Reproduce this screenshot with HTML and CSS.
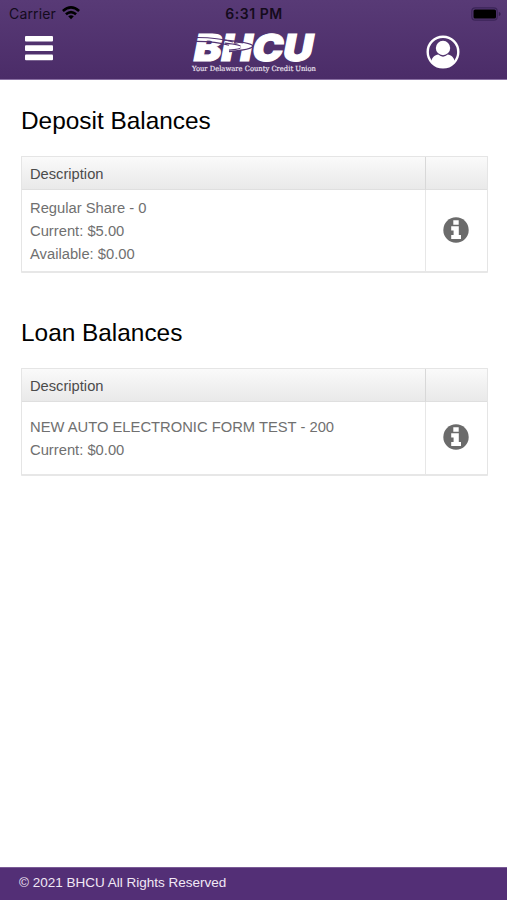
FILE: index.html
```html
<!DOCTYPE html>
<html lang="en">
<head>
<meta charset="utf-8">
<title>BHCU Balances</title>
<link rel="stylesheet" href="styles.css">
</head>
<body>
<header class="header">
  <div class="status">
    <div class="carrier"><span>Carrier</span>
      <svg class="wifi" width="18" height="14" viewBox="0 0 18 14" fill="none" stroke="#000" stroke-width="2.6"><path d="M.9 5Q9-2.2 17.1 5"/><path d="M3.9 8.3Q9 3.9 14.1 8.3"/><path d="M6.2 10.3Q9 8 11.8 10.3L9 13.3Z" fill="#000" stroke="none"/></svg>
    </div>
    <span class="time">6:31 PM</span>
    <svg class="battery" width="30" height="14" viewBox="0 0 30 14"><rect x=".8" y=".8" width="25.4" height="12.4" rx="3.5" fill="none" stroke="#3b2558" stroke-width="1.2"/><rect x="2.5" y="2.5" width="22.5" height="9" rx="1.6"/><path d="M27.8 5c2.4.7 2.4 3.3 0 4z" fill="#33204d"/></svg>
  </div>
  <nav class="nav">
    <svg class="menu" width="28" height="25" viewBox="0 0 28 25" fill="#fff"><rect y="0" width="28" height="5.6" rx="1"/><rect y="9.3" width="28" height="5.6" rx="1"/><rect y="18.6" width="28" height="5.6" rx="1"/></svg>
    <svg class="logo" width="126" height="43" viewBox="0 0 126 43">
      <g transform="translate(1 29.7) skewX(-11)"><text class="brand" x="0" y="0" textLength="119" lengthAdjust="spacingAndGlyphs">BHCU</text></g>
      <path d="M2 6.5Q26 6 42 11" fill="none" stroke="#523371" stroke-width="1.1"/>
      <path d="M2 10.4Q24 10 38 14.2" fill="none" stroke="#523371" stroke-width="1.2"/>
      <path d="M33 9.2Q60 11.5 62 15 61 18.6 38 20.6" fill="none" stroke="#523371" stroke-width="1.2"/>
      <path d="M34 12.2Q51 14 51 16.2 50 18 38 19.2" fill="none" stroke="#523371" stroke-width="1.2"/>
      <path d="M44 11.6Q57 13 58 15 57 17 49 18 53 14.5 44 11.6Z" fill="#fff"/>
      <text class="tagline" x="1" y="39.5" textLength="124" lengthAdjust="spacingAndGlyphs">Your Delaware County Credit Union</text>
    </svg>
    <svg class="user" width="34" height="34" viewBox="0 0 34 34"><circle cx="17" cy="17" r="15.3" fill="none" stroke="#fff" stroke-width="2.4"/><path d="M5.4 26.2C6 22.3 9 20 12.2 19.6Q17 23.8 21.8 19.6C25 20 28 22.3 28.6 26.2Q24.8 32.5 17 32.5T5.4 26.2Z" fill="#fff"/><circle cx="17" cy="13" r="7.2" fill="#fff"/></svg>
  </nav>
</header>
<main class="content">
  <section class="balances">
    <h2>Deposit Balances</h2>
    <div class="grid">
      <div class="head">Description</div><div class="head"></div>
      <div class="cell deposit"><p>Regular Share - 0</p><p>Current: $5.00</p><p>Available: $0.00</p></div>
      <div class="cell action"><svg class="info" width="26" height="26" viewBox="0 0 26 26"><circle cx="13" cy="13" r="12.7" fill="#6b6b6b"/><path d="M10.3 3.2h5.4v4.5h-5.4zM8.2 9.2h7.6v8.7h2.2v4.2H8.2v-4.2h2.4v-4.5H8.2z" fill="#fff"/></svg></div>
    </div>
  </section>
  <section class="balances loans">
    <h2>Loan Balances</h2>
    <div class="grid">
      <div class="head">Description</div><div class="head"></div>
      <div class="cell loan"><p>NEW AUTO ELECTRONIC FORM TEST - 200</p><p>Current: $0.00</p></div>
      <div class="cell action loan-action"><svg class="info" width="26" height="26" viewBox="0 0 26 26"><circle cx="13" cy="13" r="12.7" fill="#6b6b6b"/><path d="M10.3 3.2h5.4v4.5h-5.4zM8.2 9.2h7.6v8.7h2.2v4.2H8.2v-4.2h2.4v-4.5H8.2z" fill="#fff"/></svg></div>
    </div>
  </section>
</main>
<footer class="footer">© 2021 BHCU All Rights Reserved</footer>
</body>
</html>
```
FILE: styles.css
```css
* { box-sizing: border-box; }
body {
  margin: 0;
  height: 900px;
  display: flex;
  flex-direction: column;
  overflow: hidden;
  background: #fff;
  font-family: "Liberation Sans", Arial, sans-serif;
}
svg { display: block; }
.header {
  height: 80px;
  flex: none;
  background: linear-gradient(#583a76, #4b2c68);
  border-bottom: 1px solid #8a70a3;
}
.status {
  height: 28px;
  padding: 0 6px 0 9px;
  display: grid;
  grid-template-columns: 1fr auto 1fr;
  align-items: center;
  color: #140b1c;
  font: 14px/28px Inter, sans-serif;
}
.carrier { display: flex; align-items: center; gap: 6px; letter-spacing: .15px; }
.wifi { margin-top: -2px; }
.time { font-weight: 600; font-size: 14px; letter-spacing: .55px; margin-right: 2px; }
.battery { justify-self: end; margin-top: -1px; }
.nav { height: 51px; padding: 0 47px 0 25px; display: flex; align-items: flex-start; justify-content: space-between; }
.menu { margin-top: 8px; }
.logo { margin: 3px 0 0 28px; overflow: visible; }
.user { margin-top: 7px; }
.brand { font: 900 37px Inter, sans-serif; fill: #fff; stroke: #fff; stroke-width: 1.2; }
.tagline { font: 400 7.2px "DejaVu Serif", serif; fill: #f0e8f4; stroke: #f0e8f4; stroke-width: .15; }
.content { flex: 1; padding: 25px 19px 0 21px; }
h2 { margin: 0 0 19px; height: 32px; font-size: 24.4px; line-height: 32px; font-weight: 400; color: #000; }
.grid {
  display: grid;
  grid-template-columns: 404px 1fr;
  border: 1px solid #e5e5e5;
  border-bottom: 2px solid #e7e7e7;
  border-radius: 1px;
}
.head {
  height: 33px;
  padding-left: 8px;
  line-height: 34px;
  font-size: 14.7px;
  color: #4b4b4b;
  background: linear-gradient(#fafafa, #e9e9e9);
  border-bottom: 1px solid #dfdfdf;
}
.head:nth-child(odd) { border-right: 1px solid #d8d8d8; }
.cell { padding: 0 8px; font-size: 14.75px; line-height: 23px; color: #707070; }
.cell:nth-child(odd) { border-right: 1px solid #e7e7e7; }
.cell p { margin: 0; white-space: nowrap; }
.deposit { height: 81px; padding-top: 7px; }
.loan { height: 72px; padding-top: 14px; }
.action { display: flex; align-items: center; justify-content: center; padding: 0 2px 2px 0; }
.loan-action { padding-bottom: 3px; }
.loans { margin-top: 44px; }
.footer {
  height: 33px;
  flex: none;
  padding-left: 19px;
  font-size: 13.5px;
  line-height: 29px;
  color: #f1e8f5;
  background: #532f76;
  border-top: 1px solid #7a5b96;
}
```
